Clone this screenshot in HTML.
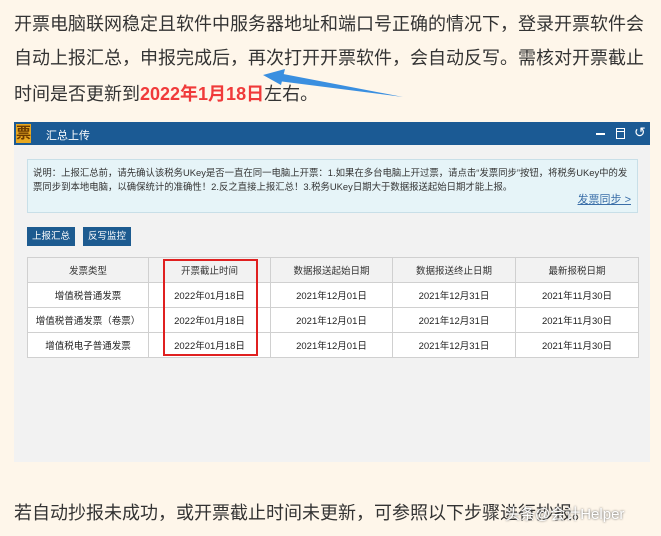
<!DOCTYPE html>
<html><head><meta charset="utf-8"><style>
*{margin:0;padding:0;box-sizing:border-box}
body{width:661px;height:536px;background:#fef6ea;font-family:"Liberation Sans","Noto Sans CJK SC",sans-serif;position:relative;overflow:hidden;color:#333}
.p{position:absolute;left:14px;font-size:18px;white-space:nowrap;color:#333}
.red{color:#f03a3a;font-weight:bold}
.panel{position:absolute;left:14px;top:122px;width:636px;height:340px;background:#f2f2f2}
.hd{position:absolute;left:0;top:0;width:636px;height:23px;background:#1b5a94;color:#fff;font-size:11px}
.info{position:absolute;left:13px;top:37px;width:611px;height:54px;background:#e6f4f8;border:1px solid #c8dfe8;font-size:9.4px;line-height:14px;padding:6px 5px;color:#333}
.btn{position:absolute;top:105px;height:19px;background:#1d5b90;color:#fff;font-size:9.5px;line-height:19px;text-align:center}
table{position:absolute;left:13px;top:135px;width:611px;border-collapse:collapse;background:#fff;font-size:9.5px;color:#222;table-layout:fixed}
td{border:1px solid #d0d0d0;text-align:center;height:25px;white-space:nowrap}
tr:first-child td{background:#f2f2f2;color:#333}
</style></head><body>
<div class="p" style="top:10px">开票电脑联网稳定且软件中服务器地址和端口号正确的情况下，登录开票软件会</div>
<div class="p" style="top:44px">自动上报汇总，申报完成后，再次打开开票软件，会自动反写。需核对开票截止</div>
<div class="p" style="top:80px">时间是否更新到<span class="red">2022年1月18日</span>左右。</div>
<svg style="position:absolute;left:0;top:0" width="661" height="110"><polygon points="278,73 403,97 278,81" fill="#3a8fe0"/><polygon points="263,75 285,69 281,85" fill="#3a8fe0"/></svg>
<div class="panel">
 <div class="hd">
  <div style="position:absolute;left:2px;top:2px;width:15px;height:19px;background:#e8a820;color:#6a3a00;font-size:15px;line-height:19px;text-align:center;font-weight:bold">票</div>
  <div style="position:absolute;left:32px;top:5px">汇总上传</div>
  <div style="position:absolute;left:582px;top:11px;width:9px;height:1.5px;background:#fff"></div>
  <div style="position:absolute;left:602px;top:6px;width:9px;height:11px;border:1.5px solid #fff"><div style="border-top:1.5px solid #fff;margin-top:2px"></div></div>
  <div style="position:absolute;left:620px;top:2px;font-size:14px">↺</div>
 </div>
 <div class="info">说明：上报汇总前，请先确认该税务UKey是否一直在同一电脑上开票：1.如果在多台电脑上开过票，请点击“发票同步”按钮，将税务UKey中的发票同步到本地电脑，以确保统计的准确性！2.反之直接上报汇总！3.税务UKey日期大于数据报送起始日期才能上报。
  <div style="position:absolute;right:6px;bottom:5px;color:#3a6ea8;font-size:11px;text-decoration:underline">发票同步 &gt;</div></div>
 <div class="btn" style="left:13px;width:48px">上报汇总</div>
 <div class="btn" style="left:69px;width:48px">反写监控</div>
 <table>
  <colgroup><col style="width:121px"><col style="width:122px"><col style="width:122px"><col style="width:123px"><col style="width:123px"></colgroup>
  <tr><td>发票类型</td><td>开票截止时间</td><td>数据报送起始日期</td><td>数据报送终止日期</td><td>最新报税日期</td></tr>
  <tr><td>增值税普通发票</td><td>2022年01月18日</td><td>2021年12月01日</td><td>2021年12月31日</td><td>2021年11月30日</td></tr>
  <tr><td>增值税普通发票（卷票）</td><td>2022年01月18日</td><td>2021年12月01日</td><td>2021年12月31日</td><td>2021年11月30日</td></tr>
  <tr><td>增值税电子普通发票</td><td>2022年01月18日</td><td>2021年12月01日</td><td>2021年12月31日</td><td>2021年11月30日</td></tr>
 </table>
 <div style="position:absolute;left:149px;top:137px;width:95px;height:97px;border:2px solid #e02020"></div>
</div>
<div class="p" style="top:499px">若自动抄报未成功，或开票截止时间未更新，可参照以下步骤进行抄报。</div>
<div style="position:absolute;left:505px;top:503px;font-size:15px;color:#fff;text-shadow:0 0 2px #555">头条@会计Helper</div>
</body></html>
